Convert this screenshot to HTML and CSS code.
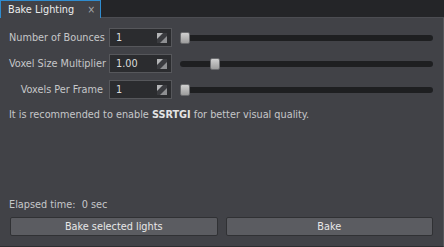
FILE: index.html
```html
<!DOCTYPE html>
<html lang="en">
<head>
  <meta charset="UTF-8" />
  <title>Bake Lighting</title>
  <link rel="stylesheet" href="styles.css">
</head>
<body>

  <!-- Tab bar -->
  <div class="tabbar">
    <div class="tab">
      <span class="tab-title">Bake Lighting</span>
      <span class="tab-close">×</span>
    </div>
  </div>

  <!-- Panel -->
  <div class="panel">
    <div class="row">
      <div class="label">Number of Bounces</div>
      <div class="spinbox"><span>1</span><svg class="spin-icon" width="10" height="10" viewBox="0 0 10 10"><rect width="10" height="10" fill="#3a3b3f"/><polygon points="0,0 6,0 0,6" fill="#b4b5b7"/><polygon points="10,3 10,10 3,10" fill="#8e8f92"/></svg></div>
      <div class="slider"><div class="track"></div><div class="handle" style="left: 0px;"></div></div>
    </div>
    <div class="row">
      <div class="label">Voxel Size Multiplier</div>
      <div class="spinbox"><span>1.00</span><svg class="spin-icon" width="10" height="10" viewBox="0 0 10 10"><rect width="10" height="10" fill="#3a3b3f"/><polygon points="0,0 6,0 0,6" fill="#b4b5b7"/><polygon points="10,3 10,10 3,10" fill="#8e8f92"/></svg></div>
      <div class="slider"><div class="track"></div><div class="handle" style="left: 30px;"></div></div>
    </div>
    <div class="row">
      <div class="label">Voxels Per Frame</div>
      <div class="spinbox"><span>1</span><svg class="spin-icon" width="10" height="10" viewBox="0 0 10 10"><rect width="10" height="10" fill="#3a3b3f"/><polygon points="0,0 6,0 0,6" fill="#b4b5b7"/><polygon points="10,3 10,10 3,10" fill="#8e8f92"/></svg></div>
      <div class="slider"><div class="track"></div><div class="handle" style="left: 0px;"></div></div>
    </div>

    <p class="hint">It is recommended to enable <b>SSRTGI</b> for better visual quality.</p>

    <div class="elapsed">Elapsed time:&nbsp; 0 sec</div>
    <div class="buttons">
      <button class="btn">Bake selected lights</button>
      <button class="btn">Bake</button>
    </div>
  </div>

</body>
</html>
```

FILE: styles.css
```css
body {
  margin: 0;
  background: #242528;
  font-family: "DejaVu Sans Condensed", "DejaVu Sans", sans-serif;
  font-size: 10.8px;
  color: #c6c7c9;
  width: 444px;
  height: 247px;
  overflow: hidden;
}

/* Tab bar */
.tabbar {
  height: 18px;
  display: flex;
  border-bottom: 1px solid #4c4d52;
  box-sizing: border-box;
}

.tab {
  width: 101px;
  height: 18px;
  box-sizing: border-box;
  background: #414247;
  border: 1px solid #2f8ccf;
  border-bottom: none;
  display: flex;
  align-items: center;
  padding: 0 5px 0 7px;
}

.tab-title {
  flex: 1;
  color: #eceded;
}

.tab-close {
  color: #a8a9ac;
  font-size: 10px;
}

/* Panel */
.panel {
  height: 229px;
  box-sizing: border-box;
  background: #414247;
  border-right: 1px solid #55565a;
  border-bottom: 1px solid #2c2d30;
  padding: 10px 10px 10px 9px;
  display: flex;
  flex-direction: column;
}

.row {
  display: flex;
  align-items: center;
  height: 19px;
  margin-bottom: 7px;
}

.label {
  width: 94px;
  text-align: right;
  white-space: nowrap;
  margin-right: 6px;
}

.spinbox {
  width: 63px;
  height: 19px;
  box-sizing: border-box;
  background: #2b2c2f;
  border: 1px solid #56575b;
  display: flex;
  align-items: center;
  padding: 0 4px 0 6px;
  color: #dcdcdc;
}

.spinbox span {
  flex: 1;
}

.spin-icon {
  display: block;
}

.slider {
  flex: 1;
  position: relative;
  height: 12px;
  margin-left: 8px;
}

.track {
  margin-top: 3px;
  height: 6px;
  background: #1e1f21;
  border-radius: 3px;
}

.handle {
  position: absolute;
  top: 0;
  width: 10px;
  height: 12px;
  box-sizing: border-box;
  border-radius: 2px;
  background: linear-gradient(#d0d0d0, #9c9c9c);
  border: 1px solid #6a6b6e;
}

.hint {
  margin: 0;
  padding-top: 2px;
}

.hint b {
  color: #e4e4e4;
}

.elapsed {
  margin-top: auto;
  margin-bottom: 6px;
}

.buttons {
  display: flex;
  gap: 8px;
  padding-left: 1px;
}

.btn {
  flex: 1;
  height: 19px;
  font: inherit;
  color: #e8e8e8;
  background: #5b5c61;
  border: 1px solid #303134;
  border-radius: 2px;
  padding: 0;
}
```
